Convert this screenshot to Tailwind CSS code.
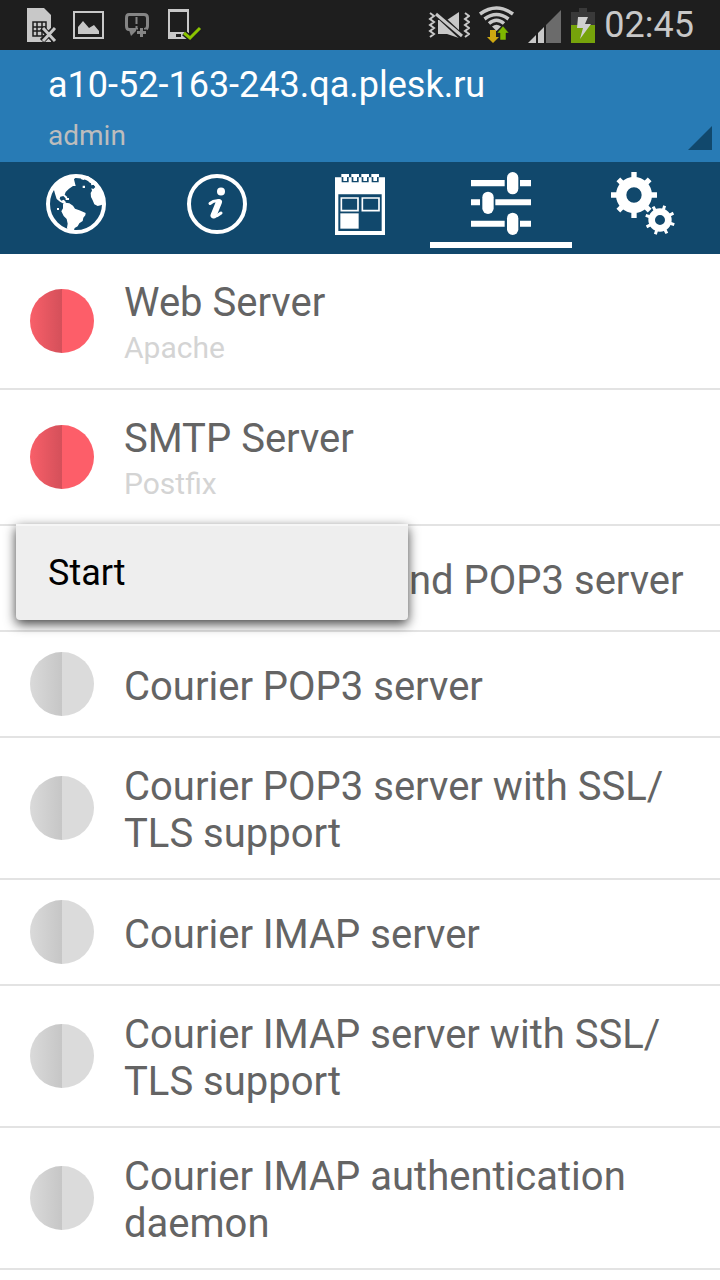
<!DOCTYPE html>
<html lang="en">
<head>
  <meta charset="UTF-8">
  <meta name="viewport" content="width=device-width, initial-scale=1">
  <title>Services</title>
  <script src="https://cdn.jsdelivr.net/npm/@tailwindcss/browser@4"></script>
</head>
<body class="bg-white min-h-screen font-[Roboto,sans-serif] text-[#646464]">

<!-- status bar -->
<div class="flex items-center justify-between h-[50px] pl-[27px] pr-[26px] bg-[#1e1e1e]">
  <div class="flex gap-4">
    <svg class="w-[30px] h-[50px]" viewBox="27 0 30 50" fill="#c8c8c8">
      <path d="M27 8H44L51 15V42H27Z"/>
      <path d="M33 22H46V36H33ZM33 27H46M33 31H46M37 22V36M42 22V36" fill="none" stroke="#1e1e1e" stroke-width="1.5"/>
      <path d="M42 28L55 41M55 28L42 41" stroke="#1e1e1e" stroke-width="6"/>
      <path d="M43 28L55 41M55 28L43 41" stroke="#c8c8c8" stroke-width="3"/>
    </svg>
    <svg class="w-[32px] h-[50px]" viewBox="73 0 32 50">
      <path d="M74 12H103V38H74Z" fill="none" stroke="#c8c8c8" stroke-width="2"/>
      <path d="M78 34V27L83 21L89 28L94 25L99 31V34Z" fill="#c8c8c8"/>
    </svg>
    <svg class="w-[32px] h-[50px]" viewBox="121 0 32 50" fill="none" stroke="#858585">
      <path d="M129 14.5H144Q147.500 14.500 147.500 18V26Q147.500 29.500 144 29.500H129Q126.500 29.500 126.500 26V18Q126.500 14.500 129 14.500Z" stroke-width="3"/>
      <path d="M129 30H137L131 36Z" fill="#858585" stroke="none"/>
      <path d="M136.500 17V24M136.500 26V28" stroke-width="2"/>
      <path d="M141 27V38M136 32.500H147" stroke="#1e1e1e" stroke-width="6"/>
      <path d="M141.500 28V37M137 32.500H146" stroke-width="3"/>
    </svg>
    <svg class="w-[32px] h-[50px]" viewBox="169 0 32 50" overflow="visible">
      <path d="M168 9H189V39H168ZM170 12V32H187V12Z" fill="#c8c8c8" fill-rule="evenodd"/>
      <path d="M176 34H181V37H176Z" fill="#1e1e1e"/>
      <path d="M184 33L190 38L200 28" fill="none" stroke="#1e1e1e" stroke-width="6"/>
      <path d="M184 33L190 38L200 28" fill="none" stroke="#8cc400" stroke-width="3"/>
    </svg>
  </div>
  <div class="flex items-center gap-2">
    <svg class="w-[44px] h-[50px]" viewBox="426 0 44 50" fill="#c8c8c8">
      <path d="M438 20V34H447L459 38V12L447 20Z"/>
      <path d="M435 12L463 38" stroke="#1e1e1e" stroke-width="6"/>
      <path d="M436 14L462 36" stroke="#c8c8c8" stroke-width="3"/>
      <path d="M430 13L434 16L430 19L434 22L430 25L434 28L430 31L434 34L430 37M465 13L469 16L465 19L469 22L465 25L469 28L465 31L469 34L465 37" fill="none" stroke="#c8c8c8" stroke-width="2"/>
    </svg>
    <svg class="w-[40px] h-[50px]" viewBox="478 0 40 50" fill="none">
      <path d="M480 14Q496.500 2 513 14M484.500 19Q496.500 10 508.500 19M489 23.500Q496.500 17 504 23.500" stroke="#c8c8c8" stroke-width="3.500"/>
      <path d="M492 26.500Q496.500 23 501 26.500L496.500 31Z" fill="#c8c8c8"/>
      <path d="M490 30H496V37H499L493 43L487 37H490Z" fill="#cda811"/>
      <path d="M500 40H506V33H509L503 26L497 33H500Z" fill="#7eb800" stroke="#1e1e1e" stroke-width=".5"/>
    </svg>
    <svg class="w-[36px] h-[50px]" viewBox="526 0 36 50">
      <path d="M528 43L536 35V43ZM538 33L544 27V43H538Z" fill="#c8c8c8"/>
      <path d="M546 25L561 10V43H546Z" fill="#6b6b6b"/>
    </svg>
    <svg class="w-[26px] h-[50px]" viewBox="570 0 26 50">
      <path d="M571 12H579V8H587V12H595V25H571Z" fill="#393939"/>
      <path d="M571 25H595V43H571Z" fill="#76a30b"/>
      <path d="M578 17H588L585 24H591L580 39L583 28H577Z" fill="#d0d0d0"/>
    </svg>
    <span class="text-[36px] leading-[50px] text-[#c8c8c8]">02:45</span>
  </div>
</div>

<!-- current server -->
<button class="flex w-full items-end justify-between h-28 pl-12 pr-2 pb-3 bg-[#287bb5] text-left">
  <span class="flex flex-col">
    <span class="text-[36px] leading-[42px] text-white">a10-52-163-243.qa.plesk.ru</span>
    <span class="pt-4 text-[28px] leading-[28px] text-[#bdbdbd]">admin</span>
  </span>
  <svg class="size-6" viewBox="0 0 24 24"><path d="M24 0V24H0Z" fill="#11486c"/></svg>
</button>

<!-- tabs -->
<nav class="flex pl-1 pr-1.5 pb-1.5 bg-[#11486c]">
  <a href="#web" aria-label="Websites" class="flex-1 flex justify-center pt-2.5 pb-1.5 border-b-6 border-transparent">
    <svg class="size-16" viewBox="0 0 64 64" fill="#fff">
      <circle cx="33" cy="32" r="28" fill="none" stroke="#fff" stroke-width="4"/>
      <g transform="translate(-13 -12) scale(.33333)">
        <path d="M62 96C74 66 104 47 142 46L138 51L132 58L134 66L137 78L129 78L117 86L107 96L104 104L112 111L110 116L106 114L100 108L91 110L89 116L94 122L101 119L106 124L108 130L114 131L112 135L104 133L90 125L80 117L75 101L72 90Z"/>
        <path d="M148 46L154 58L161 60L166 54L172 61L177 57L176 66L183 70L184 76L192 74L196 81L190 87L184 85L186 92L182 99L183 111L188 121L193 133L203 138L212 136L222 132L218 100L200 66L174 48Z"/>
        <path d="M99 133L106 128L118 130L129 137L135 146L148 151L167 159L166 166L160 173L158 183L148 190L143 199L134 204L131 213L114 212L111 203L113 191L110 177L101 168L94 154L99 145Z"/>
        <path d="M107 114h10v6h-10zM81 144h6v6h-6zM158 77h7v7h-7z"/>
      </g>
    </svg>
  </a>
  <a href="#info" aria-label="Information" class="flex-1 flex justify-center pt-2.5 pb-1.5 border-b-6 border-transparent">
    <svg class="size-16" viewBox="0 0 64 64" fill="none" stroke="#fff">
      <circle cx="32" cy="32" r="28" stroke-width="4"/>
      <circle cx="36" cy="19.500" r="4" fill="#fff" stroke="none"/>
      <path d="M25 31.500Q29 28 34.500 29L28 42.500Q28 47 36 41" stroke-width="3" stroke-linecap="round" stroke-linejoin="round"/>
      <path d="M34 30L28.500 43.500" stroke-width="6" stroke-linecap="round"/>
    </svg>
  </a>
  <a href="#calendar" aria-label="Calendar" class="flex-1 flex justify-center pt-2.5 pb-1.5 border-b-6 border-transparent">
    <svg class="size-16" viewBox="0 0 64 64">
      <g transform="translate(-17 -12) scale(.33333)" fill="#fff">
        <path d="M75 52H225V225H75ZM85 103V213H215V103Z" fill-rule="evenodd"/>
        <path d="M95 50h21v17h-21zM125 50h21v17h-21zM155 50h21v17h-21zM185 50h21v17h-21z" fill="#11486c"/>
        <path d="M94 42h23v9h-6v12h-11v-12h-6zM124 42h23v9h-6v12h-11v-12h-6zM154 42h23v9h-6v12h-11v-12h-6zM184 42h23v9h-6v12h-11v-12h-6z"/>
        <path d="M94 114H144V152H94ZM157 114H207V152H157Z" fill="none" stroke="#fff" stroke-width="5"/>
        <path d="M91 160H146V206H91Z"/>
      </g>
    </svg>
  </a>
  <a href="#services" aria-label="Services" aria-current="page" class="flex-1 flex justify-center pt-2.5 pb-1.5 border-b-6 border-white">
    <svg class="size-16" viewBox="0 0 64 64">
      <g transform="translate(-159 -12) scale(.33333)" fill="#fff">
        <path d="M483 60H584V79H483ZM630 60H663V79H630ZM483 118H510V136H483ZM556 118H663V136H556ZM483 182H584V200H483ZM630 182H663V200H630Z"/>
        <rect x="591" y="36" width="34" height="67" rx="17"/>
        <rect x="517" y="95" width="34" height="67" rx="17"/>
        <rect x="591" y="158" width="34" height="67" rx="17"/>
      </g>
    </svg>
  </a>
  <a href="#settings" aria-label="Settings" class="flex-1 flex justify-center pt-2.5 pb-1.5 border-b-6 border-transparent">
    <svg class="size-16" viewBox="0 0 64 64">
      <g transform="translate(-51 -62) scale(.33333)" fill="none" stroke="#fff">
        <circle cx="222" cy="255" r="38.500" stroke-width="31"/>
        <path d="M222 186V206M222 304V324M153 255H173M271 255H291M175 208L187 220M269 208L257 220M175 302L187 290M269 302L257 290" stroke-width="16"/>
        <circle cx="300" cy="330" r="25" stroke-width="20"/>
        <path d="M300 285V298M300 362V375M255 330H268M332 330H345M268 298L278 308M332 298L322 308M268 362L278 352M332 362L322 352" stroke-width="9" transform="rotate(18 300 330)"/>
      </g>
    </svg>
  </a>
</nav>

<!-- services -->
<ul class="text-[40px] leading-[47px]">
  <li class="flex items-center gap-[30px] px-[30px] py-[21px] border-b-2 border-[#e3e3e3]">
    <span class="size-16 shrink-0 rounded-full bg-linear-to-r from-[#f95f69] to-[#d4505a] bg-[length:50%_100%] bg-no-repeat bg-[#fd5e69]"></span>
    <div class="pb-0.5">
      <h2 class="pt-1">Web Server</h2>
      <p class="pt-1 text-[30px] leading-[35px] text-[#d4d4d4]">Apache</p>
    </div>
  </li>
  <li class="flex items-center gap-[30px] px-[30px] py-[21px] border-b-2 border-[#e3e3e3]">
    <span class="size-16 shrink-0 rounded-full bg-linear-to-r from-[#f95f69] to-[#d4505a] bg-[length:50%_100%] bg-no-repeat bg-[#fd5e69]"></span>
    <div class="pb-0.5">
      <h2 class="pt-1">SMTP Server</h2>
      <p class="pt-1 text-[30px] leading-[35px] text-[#d4d4d4]">Postfix</p>
    </div>
  </li>
  <li class="relative flex items-center gap-[30px] px-[30px] py-5 border-b-2 border-[#e3e3e3]">
    <span class="size-16 shrink-0 rounded-full bg-[#dbdbdb]"></span>
    <h2 class="pt-1">Dovecot IMAP and POP3 server</h2>
    <!-- context menu -->
    <div class="absolute left-4 -top-0.5 w-[392px] rounded-b-sm border-t-2 border-[#f6f6f6] bg-[#eee] shadow-[0_4px_12px_rgba(0,0,0,0.75)]">
      <button class="w-full px-8 py-6 text-left text-[36px] leading-[46px] text-black">Start</button>
    </div>
  </li>
  <li class="flex items-center gap-[30px] px-[30px] py-5 border-b-2 border-[#e3e3e3]">
    <span class="size-16 shrink-0 rounded-full bg-linear-to-r from-[#dadada] to-[#c6c6c6] bg-[length:50%_100%] bg-no-repeat bg-[#dbdbdb]"></span>
    <h2 class="pt-1">Courier POP3 server</h2>
  </li>
  <li class="flex items-center gap-[30px] px-[30px] py-[21px] border-b-2 border-[#e3e3e3]">
    <span class="size-16 shrink-0 rounded-full bg-linear-to-r from-[#dadada] to-[#c6c6c6] bg-[length:50%_100%] bg-no-repeat bg-[#dbdbdb]"></span>
    <h2 class="pt-1">Courier POP3 server with SSL/<wbr>TLS support</h2>
  </li>
  <li class="flex items-center gap-[30px] px-[30px] py-5 border-b-2 border-[#e3e3e3]">
    <span class="size-16 shrink-0 rounded-full bg-linear-to-r from-[#dadada] to-[#c6c6c6] bg-[length:50%_100%] bg-no-repeat bg-[#dbdbdb]"></span>
    <h2 class="pt-1">Courier IMAP server</h2>
  </li>
  <li class="flex items-center gap-[30px] px-[30px] py-[21px] border-b-2 border-[#e3e3e3]">
    <span class="size-16 shrink-0 rounded-full bg-linear-to-r from-[#dadada] to-[#c6c6c6] bg-[length:50%_100%] bg-no-repeat bg-[#dbdbdb]"></span>
    <h2 class="pt-1">Courier IMAP server with SSL/<wbr>TLS support</h2>
  </li>
  <li class="flex items-center gap-[30px] px-[30px] py-[21px] border-b-2 border-[#e3e3e3]">
    <span class="size-16 shrink-0 rounded-full bg-linear-to-r from-[#dadada] to-[#c6c6c6] bg-[length:50%_100%] bg-no-repeat bg-[#dbdbdb]"></span>
    <h2 class="pt-1">Courier IMAP authentication daemon</h2>
  </li>
</ul>

</body>
</html>
